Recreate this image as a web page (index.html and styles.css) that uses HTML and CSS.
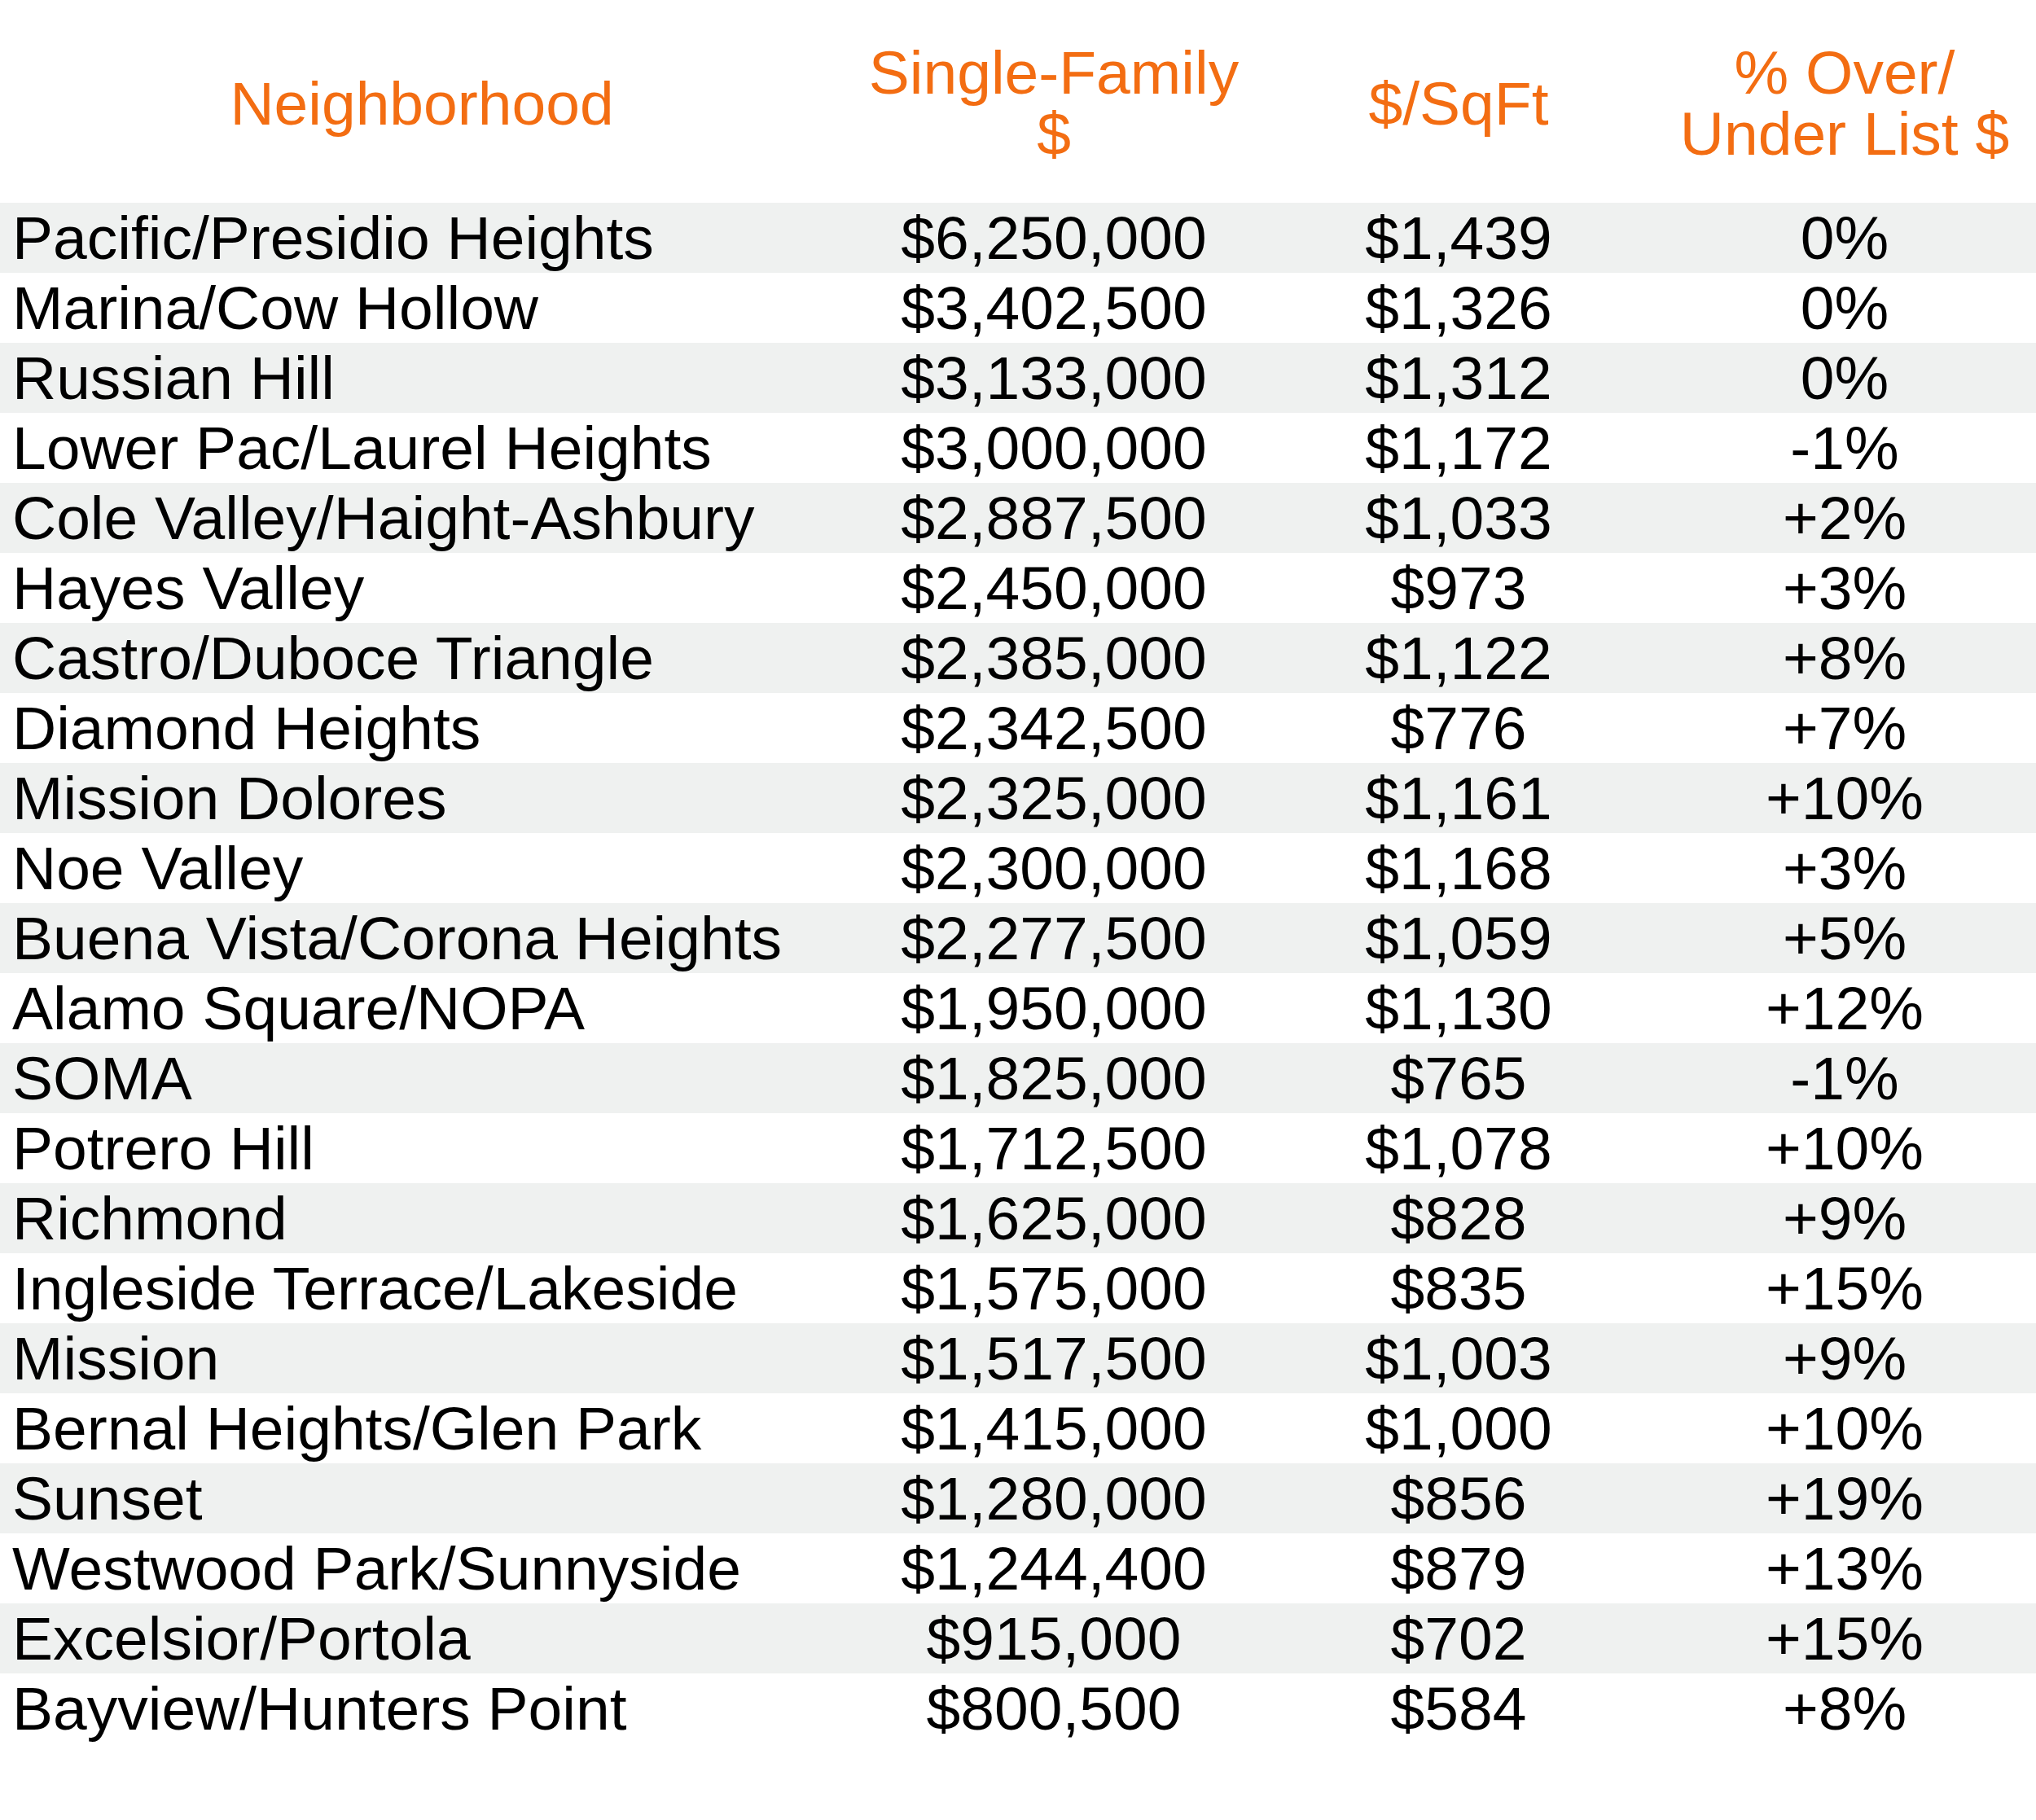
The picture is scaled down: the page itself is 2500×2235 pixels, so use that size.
FILE: index.html
```html
<!DOCTYPE html>
<html lang="en">
<head>
<meta charset="utf-8">
<title>Neighborhood Prices</title>
<link rel="stylesheet" href="styles.css">
</head>
<body>
<div class="sheet">
  <div class="head">
    <div class="hcell">Neighborhood</div>
    <div class="hcell">Single-Family<br>$</div>
    <div class="hcell">$/SqFt</div>
    <div class="hcell">% Over/<br>Under List $</div>
  </div>
  <div class="body">
    <div class="row"><div class="name">Pacific/Presidio Heights</div><div class="num">$6,250,000</div><div class="num">$1,439</div><div class="num">0%</div></div>
    <div class="row"><div class="name">Marina/Cow Hollow</div><div class="num">$3,402,500</div><div class="num">$1,326</div><div class="num">0%</div></div>
    <div class="row"><div class="name">Russian Hill</div><div class="num">$3,133,000</div><div class="num">$1,312</div><div class="num">0%</div></div>
    <div class="row"><div class="name">Lower Pac/Laurel Heights</div><div class="num">$3,000,000</div><div class="num">$1,172</div><div class="num">-1%</div></div>
    <div class="row"><div class="name">Cole Valley/Haight-Ashbury</div><div class="num">$2,887,500</div><div class="num">$1,033</div><div class="num">+2%</div></div>
    <div class="row"><div class="name">Hayes Valley</div><div class="num">$2,450,000</div><div class="num">$973</div><div class="num">+3%</div></div>
    <div class="row"><div class="name">Castro/Duboce Triangle</div><div class="num">$2,385,000</div><div class="num">$1,122</div><div class="num">+8%</div></div>
    <div class="row"><div class="name">Diamond Heights</div><div class="num">$2,342,500</div><div class="num">$776</div><div class="num">+7%</div></div>
    <div class="row"><div class="name">Mission Dolores</div><div class="num">$2,325,000</div><div class="num">$1,161</div><div class="num">+10%</div></div>
    <div class="row"><div class="name">Noe Valley</div><div class="num">$2,300,000</div><div class="num">$1,168</div><div class="num">+3%</div></div>
    <div class="row"><div class="name">Buena Vista/Corona Heights</div><div class="num">$2,277,500</div><div class="num">$1,059</div><div class="num">+5%</div></div>
    <div class="row"><div class="name">Alamo Square/NOPA</div><div class="num">$1,950,000</div><div class="num">$1,130</div><div class="num">+12%</div></div>
    <div class="row"><div class="name">SOMA</div><div class="num">$1,825,000</div><div class="num">$765</div><div class="num">-1%</div></div>
    <div class="row"><div class="name">Potrero Hill</div><div class="num">$1,712,500</div><div class="num">$1,078</div><div class="num">+10%</div></div>
    <div class="row"><div class="name">Richmond</div><div class="num">$1,625,000</div><div class="num">$828</div><div class="num">+9%</div></div>
    <div class="row"><div class="name">Ingleside Terrace/Lakeside</div><div class="num">$1,575,000</div><div class="num">$835</div><div class="num">+15%</div></div>
    <div class="row"><div class="name">Mission</div><div class="num">$1,517,500</div><div class="num">$1,003</div><div class="num">+9%</div></div>
    <div class="row"><div class="name">Bernal Heights/Glen Park</div><div class="num">$1,415,000</div><div class="num">$1,000</div><div class="num">+10%</div></div>
    <div class="row"><div class="name">Sunset</div><div class="num">$1,280,000</div><div class="num">$856</div><div class="num">+19%</div></div>
    <div class="row"><div class="name">Westwood Park/Sunnyside</div><div class="num">$1,244,400</div><div class="num">$879</div><div class="num">+13%</div></div>
    <div class="row"><div class="name">Excelsior/Portola</div><div class="num">$915,000</div><div class="num">$702</div><div class="num">+15%</div></div>
    <div class="row"><div class="name">Bayview/Hunters Point</div><div class="num">$800,500</div><div class="num">$584</div><div class="num">+8%</div></div>
  </div>
</div>
</body>
</html>
```

FILE: styles.css
```css
html, body {
  margin: 0;
  padding: 0;
  background: #ffffff;
}

.sheet {
  width: 2500px;
  height: 2235px;
  font-family: "Liberation Sans", Arial, sans-serif;
  font-size: 75px;
  color: #000000;
}

.head {
  display: grid;
  grid-template-columns: 1036px 516px 478px 470px;
  align-items: center;
  height: 244px;
  padding-top: 5px;
}

.hcell {
  color: #f36d12;
  text-align: center;
  line-height: 75px;
}

.body {
  display: flex;
  flex-direction: column;
}

.row {
  display: grid;
  grid-template-columns: 1036px 516px 478px 470px;
  height: 86px;
  line-height: 86px;
  white-space: nowrap;
}

.row:nth-child(odd) {
  background: #eff1f0;
}

.name {
  padding-left: 15px;
}

.num {
  text-align: center;
}
```
